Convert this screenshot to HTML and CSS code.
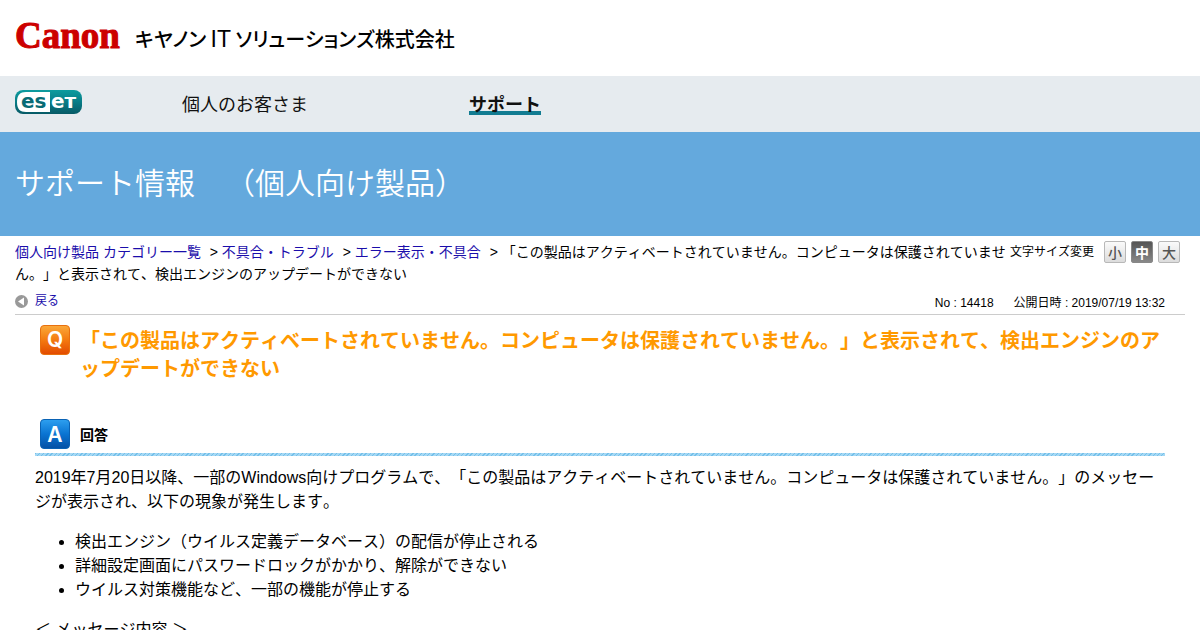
FILE: index.html
```html
<!DOCTYPE html>
<html lang="ja">
<head>
<meta charset="utf-8">
<meta name="viewport" content="width=device-width, initial-scale=1">
<title>サポート情報（個人向け製品）</title>
<link rel="stylesheet" href="styles.css">
</head>
<body>
<header class="site-header">
  <svg class="canon-logo" width="106" height="46" viewBox="0 0 106 46" role="img" aria-label="Canon">
    <text x="0" y="32" class="canon-word">Canon</text>
  </svg>
  <span class="company">キヤノン <span class="company-latin">IT</span> ソリューションズ株式会社</span>
</header>
<nav class="site-nav">
  <a class="eset-link" href="#">
    <svg class="eset-logo" width="68" height="26" viewBox="0 0 68 26" role="img" aria-label="ESET">
      <defs>
        <linearGradient id="teal" x1="0" y1="0" x2="0" y2="1">
          <stop offset="0" stop-color="#0d9c9f"/>
          <stop offset=".5" stop-color="#087c86"/>
          <stop offset="1" stop-color="#075a66"/>
        </linearGradient>
      </defs>
      <rect x="0" y="0" width="67" height="24" rx="8" fill="url(#teal)"/>
      <path d="M35 2H11C5 2 2 5 2 12s3 10 9 10h24z" fill="#fff"/>
      <text x="6" y="18" class="eset-word" fill="#086b75">es</text>
      <text x="36" y="18" class="eset-word" fill="#fff">eт</text>
    </svg>
  </a>
  <a class="nav-item" href="#">個人のお客さま</a>
  <a class="nav-item nav-current" href="#">サポート</a>
</nav>
<div class="banner"><h1>サポート情報　（個人向け製品）</h1></div>
<main class="page">
  <div class="trail">
    <div class="text-size">
      <span class="text-size-label">文字サイズ変更</span>
      <button type="button" class="size-button">小</button>
      <button type="button" class="size-button size-active">中</button>
      <button type="button" class="size-button">大</button>
    </div>
    <a href="#">個人向け製品 カテゴリー一覧</a>
    <span class="sep">&gt;</span> <a href="#">不具合・トラブル</a>
    <span class="sep">&gt;</span> <a href="#">エラー表示・不具合</a>
    <span class="sep">&gt;</span> 「この製品はアクティベートされていません。コンピュータは保護されていません。」と表示されて、検出エンジンのアップデートができない
  </div>
  <div class="meta">
    <a class="back" href="#">
      <svg width="13" height="13" viewBox="0 0 13 13" aria-hidden="true">
        <circle cx="6.500" cy="6.500" r="6.500" fill="#999"/>
        <path d="M9 2.500v8L3 6.500z" fill="#fff"/>
      </svg>
      戻る
    </a>
    <span class="meta-info"><span>No : 14418</span><span>公開日時 : 2019/07/19 13:32</span></span>
  </div>
  <article class="faq">
    <div class="question">
      <svg class="badge" width="30" height="30" viewBox="0 0 30 30" aria-hidden="true">
        <defs>
          <linearGradient id="orange" x1="0" y1="0" x2="0" y2="1">
            <stop offset="0" stop-color="#fba93a"/>
            <stop offset=".5" stop-color="#f47a10"/>
            <stop offset="1" stop-color="#e24a00"/>
          </linearGradient>
        </defs>
        <rect x=".5" y=".5" width="29" height="29" rx="3.500" fill="url(#orange)" stroke="#e8700f"/>
        <text x="15" y="22" class="badge-letter">Q</text>
      </svg>
      <h2>「この製品はアクティベートされていません。コンピュータは保護されていません。」と表示されて、検出エンジンのアップデートができない</h2>
    </div>
    <div class="answer-head">
      <svg class="badge" width="30" height="30" viewBox="0 0 30 30" aria-hidden="true">
        <defs>
          <linearGradient id="blue" x1="0" y1="0" x2="0" y2="1">
            <stop offset="0" stop-color="#2ea0f0"/>
            <stop offset=".5" stop-color="#0a74d2"/>
            <stop offset="1" stop-color="#0450a4"/>
          </linearGradient>
        </defs>
        <rect x=".5" y=".5" width="29" height="29" rx="3.500" fill="url(#blue)" stroke="#0a62b4"/>
        <text x="15" y="23" class="badge-letter">A</text>
      </svg>
      <h3>回答</h3>
    </div>
    <div class="answer">
      <p>2019年7月20日以降、一部のWindows向けプログラムで、「この製品はアクティベートされていません。コンピュータは保護されていません。」のメッセージが表示され、以下の現象が発生します。</p>
      <ul>
        <li>検出エンジン（ウイルス定義データベース）の配信が停止される</li>
        <li>詳細設定画面にパスワードロックがかかり、解除ができない</li>
        <li>ウイルス対策機能など、一部の機能が停止する</li>
      </ul>
      <p>＜ メッセージ内容 ＞</p>
    </div>
  </article>
</main>
</body>
</html>
```
FILE: styles.css
```css
* { box-sizing: border-box; }
body {
  margin: 0;
  height: 100vh;
  overflow: hidden;
  background: #fff;
  color: #000;
  font-family: "Liberation Sans", "Noto Sans CJK JP", sans-serif;
  font-size: 16px;
  line-height: 24px;
  font-kerning: none;
  text-spacing-trim: space-all;
  line-break: loose;
}
a { color: #1a0dab; text-decoration: none; }
h1, h2, h3, p { margin: 0; }

.site-header {
  display: flex;
  align-items: center;
  gap: 14px;
  height: 76px;
  padding: 2px 15px 0;
}
.canon-word {
  font-family: "Liberation Serif", serif;
  font-weight: 700;
  font-size: 37px;
  fill: #c00;
  stroke: #c00;
}
.company {
  font-size: 20px;
  font-weight: 500;
  font-family: "Noto Sans CJK JP", sans-serif;
  font-feature-settings: "palt";
  white-space: nowrap;
}
.company-latin { font-family: "Liberation Sans", sans-serif; font-size: 23px; font-weight: 400; }

.site-nav {
  display: flex;
  align-items: center;
  height: 56px;
  padding: 0 15px;
  background: #e6ebef;
}
.eset-link { flex: none; width: 167px; line-height: 0; padding-bottom: 2px; }
.eset-word { font-family: "DejaVu Sans", sans-serif; font-weight: 700; font-size: 20px; }
.nav-item {
  width: 287px;
  padding-top: 1px;
  font-size: 18px;
  color: #111;
}
.nav-current {
  font-weight: 700;
  text-decoration: underline;
  text-decoration-color: #127c92;
  text-decoration-thickness: 4px;
  text-underline-offset: 0;
  text-decoration-skip-ink: none;
}

.banner {
  padding: 32px 15px;
  background: #64a9dd;
  color: #fff;
}
.banner h1 { font-size: 30px; line-height: 40px; font-weight: 350; }

.page { padding: 5px 15px 0; }
.trail { font-size: 14px; line-height: 22px; }
.sep { margin-left: 5px; }
.text-size {
  float: right;
  display: flex;
  align-items: center;
  gap: 5px;
  height: 22px;
  padding: 0 5px 0 0;
  font-size: 12px;
}
.text-size-label { padding-right: 5px; }
.size-button {
  width: 22px;
  height: 22px;
  padding: 0;
  border: 1px solid #b8b8b8;
  border-radius: 2px;
  background: linear-gradient(#fafafa, #dcdcdc);
  color: #555;
  font: 500 14px/18px "Noto Sans CJK JP", sans-serif;
}
.size-active {
  border-color: #888;
  background: linear-gradient(#555, #888);
  color: #fff;
  font-weight: 700;
}

.meta {
  display: flex;
  justify-content: space-between;
  align-items: flex-end;
  height: 30px;
  padding-right: 20px;
  border-bottom: 1px solid #ccc;
  font-size: 12px;
  line-height: 22px;
}
.back { display: flex; align-items: center; gap: 7px; height: 26px; }
.meta-info { display: flex; gap: 20px; }

.faq { padding: 10px 20px 0; }
.question { display: flex; gap: 10px; padding-left: 5px; }
.badge { flex: none; }
.badge-letter {
  font-family: Inter, sans-serif;
  font-weight: 600;
  font-size: 21px;
  text-anchor: middle;
  fill: #fff;
}
.question h2 {
  padding-top: 2px;
  font-size: 20px;
  line-height: 28px;
  color: #f90;
}
.answer-head {
  display: flex;
  align-items: center;
  gap: 10px;
  height: 37px;
  margin-top: 36px;
  padding: 0 0 7px 5px;
  background: repeating-linear-gradient(135deg, #74c0ea 0 1px, #a5d8f4 1px 3px) bottom / 100% 3px no-repeat;
}
.answer-head h3 { padding-top: 2px; font-size: 14px; line-height: 22px; }
.answer { padding-top: 10px; }
.answer p { margin-bottom: 16px; }
.answer ul { margin: 0 0 16px; padding-left: 40px; }
```
